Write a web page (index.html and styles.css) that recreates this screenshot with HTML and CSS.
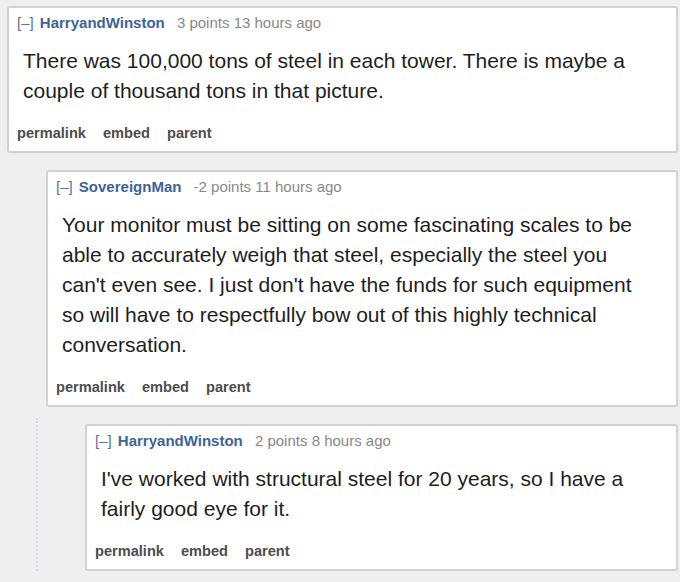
FILE: index.html
```html
<!DOCTYPE html>
<html lang="en">
<head>
    <meta charset="UTF-8">
    <meta name="viewport" content="width=device-width, initial-scale=1.0">
    <title>Comments</title>
    <link rel="stylesheet" href="styles.css">
</head>
<body>
    <div class="thread">
        <div class="comment">
            <div class="entry">
                <p class="tagline">
                    <a class="expand">[–]</a>
                    <a class="author">HarryandWinston</a>
                    <span class="score">3 points 13 hours ago</span>
                </p>
                <div class="md">
                    There was 100,000 tons of steel in each tower. There is maybe a couple of thousand tons in that picture.
                </div>
                <ul class="buttons">
                    <li><a>permalink</a></li>
                    <li><a>embed</a></li>
                    <li><a>parent</a></li>
                </ul>
            </div>

            <div class="child">
                <div class="comment">
                    <div class="entry">
                        <p class="tagline">
                            <a class="expand">[–]</a>
                            <a class="author">SovereignMan</a>
                            <span class="score">-2 points 11 hours ago</span>
                        </p>
                        <div class="md">
                            Your monitor must be sitting on some fascinating scales to be able to accurately weigh that steel, especially the steel you can't even see. I just don't have the funds for such equipment so will have to respectfully bow out of this highly technical conversation.
                        </div>
                        <ul class="buttons">
                            <li><a>permalink</a></li>
                            <li><a>embed</a></li>
                            <li><a>parent</a></li>
                        </ul>
                    </div>

                    <div class="child">
                        <div class="comment">
                            <div class="entry">
                                <p class="tagline">
                                    <a class="expand">[–]</a>
                                    <a class="author">HarryandWinston</a>
                                    <span class="score">2 points 8 hours ago</span>
                                </p>
                                <div class="md">
                                    I've worked with structural steel for 20 years, so I have a fairly good eye for it.
                                </div>
                                <ul class="buttons">
                                    <li><a>permalink</a></li>
                                    <li><a>embed</a></li>
                                    <li><a>parent</a></li>
                                </ul>
                            </div>
                        </div>
                    </div>
                </div>
            </div>
        </div>
    </div>
</body>
</html>
```

FILE: styles.css
```css
body {
    margin: 0;
    background-color: #efefef;
    font-family: "Liberation Sans", Arial, sans-serif;
    overflow: hidden;
}
.thread {
    padding: 6px 2px 0 7px;
}
.entry {
    background-color: white;
    border: 2px solid #d2d2d2;
    border-radius: 3px;
    padding: 6px 8px 9px 8px;
}
.tagline {
    margin: 0;
    font-size: 15px;
    line-height: 18px;
    color: #888;
}
.expand {
    color: #5b7298;
    margin-right: 2px;
}
.author {
    color: #3e6497;
    font-weight: bold;
    margin-right: 8px;
}
.md {
    margin-top: 14px;
    padding: 0 24px 0 6px;
    font-size: 21px;
    line-height: 30px;
    color: #1e1e1e;
}
.buttons {
    list-style: none;
    margin: 18px 0 0 0;
    padding: 0;
    display: flex;
    gap: 17px;
    font-size: 14.6px;
    line-height: 18px;
    font-weight: bold;
}
.buttons a {
    color: #4d4d4d;
}
.child {
    margin: 11px 0 0 -10px;
    padding: 6px 0 0 47px;
    border-left: 2px dotted #d9d9f3;
}
```
